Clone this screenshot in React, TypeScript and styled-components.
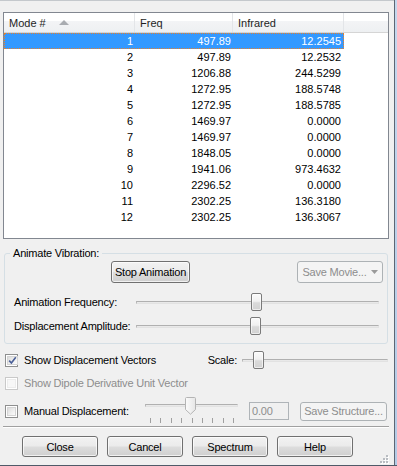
import React from 'react';
import styled, { createGlobalStyle } from 'styled-components';

const Global = createGlobalStyle`
  html, body { margin: 0; padding: 0; background: #f0f0f0; }
  body {
    font-family: "Liberation Sans", Arial, sans-serif;
    font-size: 11px;
    letter-spacing: -0.2px;
    color: #000;
  }
  * { box-sizing: border-box; }
`;

const Window = styled.div`
  width: 397px;
  height: 466px;
  display: flex;
  overflow: hidden;
  border-bottom: 1px solid #4f5a68;
`;

const Client = styled.div`
  position: relative;
  width: 394px;
  height: 465px;
  display: flex;
  flex-direction: column;
  border-top: 1px solid #c4c8cc;
  padding-top: 11px;
`;

const RightFrame = styled.div`
  width: 3px;
  border-left: 1px solid #5c6674;
  background: linear-gradient(#c5d8ee, #b4cbe6);
`;

/* ---------- list view ---------- */
const ListView = styled.div`
  margin-left: 3px;
  width: 386px;
  height: 227px;
  border: 1px solid #828790;
  background: #fff;
  display: flex;
  flex-direction: column;
  letter-spacing: 0;
`;

const Header = styled.div`
  display: flex;
  height: 20px;
  border-bottom: 1px solid #d5d5d5;
  background: linear-gradient(#ffffff 0%, #ffffff 40%, #f3f4f6 41%, #eef0f2 100%);
`;

const HeadCell = styled.div<{ $w: number; $last?: boolean }>`
  width: ${p => p.$w}px;
  flex: ${p => (p.$last ? '1 1 auto' : '0 0 auto')};
  display: flex;
  align-items: center;
  gap: 13px;
  padding-left: 5px;
  border-right: ${p => (p.$last ? 'none' : '1px solid #e3e5e8')};
  color: #1e1e1e;
`;

const Row = styled.div<{ $sel?: boolean }>`
  display: flex;
  width: 340px;
  height: 16px;
  line-height: 14px;
  background: ${p => (p.$sel ? '#3399ff' : 'transparent')};
  color: ${p => (p.$sel ? '#fff' : '#000')};
  border: 1px ${p => (p.$sel ? 'dotted #e8802a' : 'solid transparent')};
`;

const Cell = styled.div<{ $w: number }>`
  width: ${p => p.$w}px;
  text-align: right;
  padding-right: 2px;
`;

/* ---------- buttons ---------- */
const Button = styled.div<{ $w: number; $h?: number; $disabled?: boolean }>`
  width: ${p => p.$w}px;
  height: ${p => p.$h ?? 21}px;
  flex: 0 0 auto;
  display: flex;
  align-items: center;
  justify-content: center;
  gap: 4px;
  border: 1px solid ${p => (p.$disabled ? '#adb2b5' : '#707070')};
  border-radius: 3px;
  color: ${p => (p.$disabled ? '#8d8d8d' : '#000')};
  background: ${p =>
    p.$disabled
      ? '#f4f4f4'
      : 'linear-gradient(#f2f2f2 0%, #ebebeb 48%, #dddddd 52%, #cfcfcf 100%)'};
  box-shadow: inset 0 0 0 1px ${p => (p.$disabled ? '#f4f4f4' : 'rgba(255,255,255,0.7)')};
`;

/* ---------- group box ---------- */
const Group = styled.fieldset`
  margin: 8px 0 0 4px;
  width: 384px;
  height: 97px;
  border: 1px solid #d5dfe5;
  border-radius: 3px;
  padding: 0 4px 0 9px;
  display: flex;
  flex-direction: column;
`;

const Legend = styled.legend`
  padding: 0 3px;
  margin-left: -4px;
  line-height: 13px;
  color: #000;
`;

const GroupButtons = styled.div`
  display: flex;
  height: 22px;
  margin-top: 1px;
  padding-left: 97px;
  justify-content: space-between;
`;

const SliderRow = styled.div`
  display: grid;
  grid-template-columns: 122px 243px;
  align-items: center;
  height: 24px;
`;

/* ---------- slider ---------- */
const SliderBox = styled.div<{ $w: number }>`
  position: relative;
  width: ${p => p.$w}px;
  height: 20px;
  display: flex;
  align-items: center;
`;

const Rail = styled.div`
  width: 100%;
  height: 3px;
  border: 1px solid #e2e2e2;
  border-top-color: #b0b0b0;
  border-left-color: #b8b8b8;
  background: #e9e9e9;
`;

const Thumb = styled.div`
  position: absolute;
  top: 1px;
  width: 11px;
  height: 18px;
  border: 1px solid #7a7a7a;
  border-radius: 2px;
  background: linear-gradient(#fafafa 0%, #f1f1f1 45%, #dadada 55%, #d2d2d2 100%);
  box-shadow: inset 0 0 0 1px rgba(255, 255, 255, 0.6);
`;

const PointerThumb = styled.svg`
  position: absolute;
  top: 0;
`;

const Slider: React.FC<{ w: number; pos: number }> = ({ w, pos }) => (
  <SliderBox $w={w}>
    <Rail />
    <Thumb style={{ left: pos }} />
  </SliderBox>
);

/* ---------- checkbox rows ---------- */
const OptRow = styled.div<{ $h: number; $mt: number }>`
  display: flex;
  align-items: center;
  height: ${p => p.$h}px;
  margin-top: ${p => p.$mt}px;
  padding-left: 5px;
`;

const CheckLabel = styled.div<{ $disabled?: boolean; $w?: number }>`
  display: flex;
  align-items: center;
  gap: 6px;
  flex: 0 0 auto;
  width: ${p => (p.$w ? `${p.$w}px` : 'auto')};
  color: ${p => (p.$disabled ? '#8d8d8d' : '#000')};
`;

const Box = styled.div<{ $disabled?: boolean }>`
  width: 13px;
  height: 13px;
  flex: 0 0 auto;
  border: 1px solid ${p => (p.$disabled ? '#c9c9c9' : '#8e8f8f')};
  padding: 1px;
  background: #fff;
  display: flex;
`;

const BoxInner = styled.div<{ $disabled?: boolean }>`
  flex: 1;
  border: 1px solid ${p => (p.$disabled ? '#ececec' : '#d4d4d4')};
  background: ${p =>
    p.$disabled ? '#f7f7f7' : 'linear-gradient(135deg, #dcdcdc 0%, #f0f0f0 60%, #fbfbfb 100%)'};
  display: flex;
  align-items: center;
  justify-content: center;
`;

const Check: React.FC<{
  checked?: boolean;
  disabled?: boolean;
  w?: number;
  children: React.ReactNode;
}> = ({ checked, disabled, w, children }) => (
  <CheckLabel $disabled={disabled} $w={w}>
    <Box $disabled={disabled}>
      <BoxInner $disabled={disabled}>
        {checked && (
          <svg width="9" height="9" viewBox="0 0 9 9">
            <path d="M1.2 4.6 L3.4 7 L7.8 1.2" fill="none" stroke="#4a5f97" strokeWidth="1.6" />
          </svg>
        )}
      </BoxInner>
    </Box>
    {children}
  </CheckLabel>
);

const ScaleLabel = styled.span`
  margin-left: auto;
  margin-right: 5px;
`;

const RightEdge = styled.div`
  width: 6px;
  flex: 0 0 auto;
`;

const ManualSlider = styled.div`
  position: relative;
  width: 93px;
  height: 28px;
  display: flex;
  flex-direction: column;
  padding-top: 7px;
`;

const Ticks = styled.div`
  display: flex;
  justify-content: space-between;
  padding: 0 4px 0 5px;
  margin-top: 11px;
`;

const Tick = styled.div`
  width: 1px;
  height: 5px;
  background: #a0a0a0;
`;

const TextBox = styled.div`
  margin-left: 11px;
  width: 40px;
  height: 18px;
  border: 1px solid #afb4b8;
  background: #f0f0f0;
  color: #8d8d8d;
  padding-left: 2px;
  line-height: 16px;
`;

const Separator = styled.div`
  margin: 1px 0 0 3px;
  width: 386px;
  height: 2px;
  border-top: 1px solid #a0a0a0;
  border-bottom: 1px solid #ffffff;
`;

const Footer = styled.div`
  display: flex;
  gap: 9px;
  padding-left: 22px;
  margin-top: 8px;
`;

const Grip = styled.svg`
  position: absolute;
  right: 5px;
  bottom: 1px;
`;

const data: [number, string, string][] = [
  [1, '497.89', '12.2545'],
  [2, '497.89', '12.2532'],
  [3, '1206.88', '244.5299'],
  [4, '1272.95', '188.5748'],
  [5, '1272.95', '188.5785'],
  [6, '1469.97', '0.0000'],
  [7, '1469.97', '0.0000'],
  [8, '1848.05', '0.0000'],
  [9, '1941.06', '973.4632'],
  [10, '2296.52', '0.0000'],
  [11, '2302.25', '136.3180'],
  [12, '2302.25', '136.3067'],
];

export default function App() {
  return (
    <>
      <Global />
      <Window>
        <Client>
          <ListView>
            <Header>
              <HeadCell $w={131}>
                <span>Mode #</span>
                <svg width="10" height="5" viewBox="0 0 10 5">
                  <path d="M0 5 L5 0 L10 5 Z" fill="#a9acb1" />
                </svg>
              </HeadCell>
              <HeadCell $w={98}>Freq</HeadCell>
              <HeadCell $w={111}>Infrared</HeadCell>
              <HeadCell $w={44} $last />
            </Header>
            {data.map(([m, f, ir], i) => (
              <Row key={m} $sel={i === 0}>
                <Cell $w={130}>{m}</Cell>
                <Cell $w={98}>{f}</Cell>
                <Cell $w={110}>{ir}</Cell>
              </Row>
            ))}
          </ListView>

          <Group>
            <Legend>Animate Vibration:</Legend>
            <GroupButtons>
              <Button $w={79} $h={22}>Stop Animation</Button>
              <Button $w={86} $h={22} $disabled>
                <span>Save Movie...</span>
                <svg width="7" height="4" viewBox="0 0 7 4">
                  <path d="M0 0 L7 0 L3.5 4 Z" fill="#9a9a9a" />
                </svg>
              </Button>
            </GroupButtons>
            <SliderRow style={{ marginTop: 7 }}>
              <span>Animation Frequency:</span>
              <Slider w={243} pos={115} />
            </SliderRow>
            <SliderRow>
              <span>Displacement Amplitude:</span>
              <Slider w={243} pos={114} />
            </SliderRow>
          </Group>

          <OptRow $h={20} $mt={6}>
            <Check checked>Show Displacement Vectors</Check>
            <ScaleLabel>Scale:</ScaleLabel>
            <Slider w={146} pos={11} />
            <RightEdge />
          </OptRow>

          <OptRow $h={20} $mt={3}>
            <Check disabled>Show Dipole Derivative Unit Vector</Check>
          </OptRow>

          <OptRow $h={28} $mt={4}>
            <Check w={140}>Manual Displacement:</Check>
            <ManualSlider>
              <Rail />
              <PointerThumb width="11" height="18" viewBox="0 0 11 18" style={{ left: 40 }}>
                <defs>
                  <linearGradient id="pg" x1="0" y1="0" x2="1" y2="0">
                    <stop offset="0" stopColor="#fbfbfb" />
                    <stop offset="1" stopColor="#e6e6e6" />
                  </linearGradient>
                </defs>
                <path
                  d="M0.5 1.5 Q0.5 0.5 1.5 0.5 L9.5 0.5 Q10.5 0.5 10.5 1.5 L10.5 12.5 L5.5 17.2 L0.5 12.5 Z"
                  fill="url(#pg)"
                  stroke="#b4b4b4"
                />
              </PointerThumb>
              <Ticks>
                {Array.from({ length: 9 }).map((_, i) => (
                  <Tick key={i} />
                ))}
              </Ticks>
            </ManualSlider>
            <TextBox>0.00</TextBox>
            <Button $w={87} $h={19} $disabled style={{ marginLeft: 11 }}>
              Save Structure...
            </Button>
          </OptRow>

          <Separator />

          <Footer>
            <Button $w={76}>Close</Button>
            <Button $w={76}>Cancel</Button>
            <Button $w={76}>Spectrum</Button>
            <Button $w={76}>Help</Button>
          </Footer>

          <Grip width="10" height="10" viewBox="0 0 10 10">
            {[
              [7, 1],
              [4, 4],
              [7, 4],
              [1, 7],
              [4, 7],
              [7, 7],
            ].map(([x, y]) => (
              <g key={`${x}-${y}`}>
                <rect x={x + 1} y={y + 1} width="2" height="2" fill="#ffffff" />
                <rect x={x} y={y} width="2" height="2" fill="#b8bcc1" />
              </g>
            ))}
          </Grip>
        </Client>
        <RightFrame />
      </Window>
    </>
  );
}
